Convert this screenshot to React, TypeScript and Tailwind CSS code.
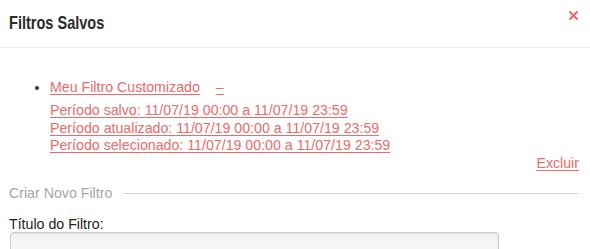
import React from "react"

const LINK = "text-[#e96b6b] underline decoration-1 underline-offset-[2px]"

const periodos = [
  "Período salvo: 11/07/19 00:00 a 11/07/19 23:59",
  "Período atualizado: 11/07/19 00:00 a 11/07/19 23:59",
  "Período selecionado: 11/07/19 00:00 a 11/07/19 23:59",
]

export default function App() {
  return (
    <div className="w-[590px] h-[249px] overflow-hidden bg-white font-['Liberation_Sans',Arial,sans-serif] text-[14.2px] text-[#333]">
      {/* Cabecalho */}
      <div className="flex items-start justify-between h-[48px] border-b border-[#ececec] pl-[9px] pr-[12px]">
        <h1 className="mt-[12px] w-[96px] text-[19px] leading-[22px] font-bold text-[#2b2b2b] whitespace-nowrap origin-left scale-x-[0.765]">
          Filtros Salvos
        </h1>
        <button className="mt-[11px] p-0" title="Fechar">
          <svg width="9" height="9" viewBox="0 0 9 9">
            <path d="M1 1 L8 8 M8 1 L1 8" stroke="#ec6e6e" strokeWidth="2.2" strokeLinecap="square" />
          </svg>
        </button>
      </div>

      <div className="pl-[9px] pr-[11px] pt-[31px]">
        {/* Filtros salvos */}
        <ul className="list-disc pl-[41px] marker:text-[#333]">
          <li className="leading-[17px]">
            <a className={LINK}>Meu Filtro Customizado</a>
            <a className={`${LINK} ml-[16px]`}>–</a>
            <div className="mt-[6px] flex flex-col">
              {periodos.map((p) => (
                <a key={p} className={`${LINK} leading-[17.5px]`}>
                  {p}
                </a>
              ))}
            </div>
          </li>
        </ul>
        <div className="flex justify-end leading-[17px]">
          <a className={LINK}>Excluir</a>
        </div>

        {/* Criar novo filtro */}
        <div className="mt-[13px] flex items-center gap-[11px] leading-[17px]">
          <span className="text-[#a6a6a6]">Criar Novo Filtro</span>
          <div className="flex-1 h-px bg-[#d6d6d6] mt-[1px]" />
        </div>

        <label className="block mt-[14px] leading-[16px] text-[#222]">Título do Filtro:</label>
        <input
          type="text"
          className="block ml-px w-[489px] h-[34px] rounded-[4px] border border-[#c9c9c9] bg-gradient-to-b from-[#f2f2f2] to-[#fafafa] shadow-[inset_0_1px_1px_rgba(0,0,0,0.06)]"
        />
      </div>
    </div>
  )
}
